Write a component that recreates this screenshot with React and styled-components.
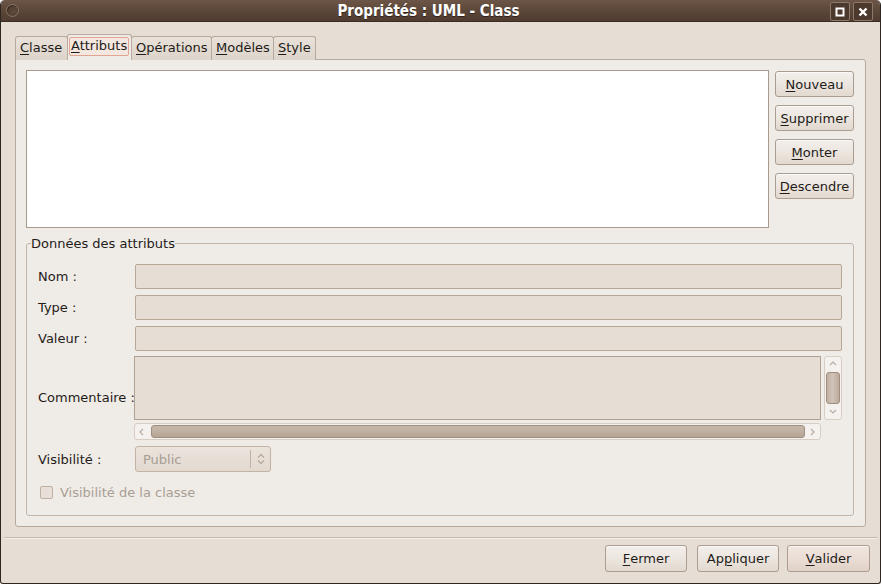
import React from "react";
import styled, { createGlobalStyle, css } from "styled-components";

const Global = createGlobalStyle`
  html, body { margin: 0; padding: 0; background: #ffffff; }
  body { font-family: "DejaVu Sans", "Liberation Sans", sans-serif; font-size: 13px; color: #1f1c19; }
  u { text-decoration: underline; text-underline-offset: 2px; text-decoration-thickness: 1px; }
`;

const Window = styled.div`
  width: 881px;
  height: 584px;
  box-sizing: border-box;
  display: flex;
  flex-direction: column;
  background: #e6ded5;
  border-left: 1px solid #2e2620;
  border-right: 1px solid #2e2620;
  border-bottom: 1px solid #2e2620;
  border-radius: 5px 5px 3px 3px;
  overflow: hidden;
`;

const TitleBar = styled.div`
  height: 22px;
  flex: none;
  position: relative;
  display: flex;
  align-items: center;
  justify-content: center;
  padding-right: 24px;
  background: linear-gradient(#6d5647 0%, #5c4739 50%, #4f3c30 100%);
  border-bottom: 1px solid #3a2c23;
  box-sizing: border-box;
`;

const Title = styled.div`
  font-family: "DejaVu Sans Condensed", "DejaVu Sans", sans-serif;
  font-stretch: condensed;
  font-weight: bold;
  font-size: 15px;
  color: #ffffff;
  text-shadow: 0 1px 0 #2d221b;
`;

const MenuDot = styled.div`
  position: absolute;
  left: 5px;
  top: 4px;
  width: 11px;
  height: 11px;
  border-radius: 50%;
  border: 1px solid #8a7565;
  background: radial-gradient(circle at 60% 60%, #5f4a3c, #4a382d);
  box-shadow: inset 1px 1px 0 #3a2b22;
`;

const WinButtons = styled.div`
  position: absolute;
  right: 7px;
  top: 2px;
  display: flex;
  gap: 3px;
`;

const WinButton = styled.div`
  width: 18px;
  height: 17px;
  border: 1px solid #8d796a;
  border-radius: 2px;
  background: #4b392e;
  display: flex;
  align-items: center;
  justify-content: center;
`;

const Body = styled.div`
  flex: 1;
  display: flex;
  flex-direction: column;
  padding: 12px 14px 0 14px;
`;

const Tabs = styled.div`
  display: flex;
  align-items: flex-end;
  height: 26px;
  position: relative;
  z-index: 1;
  margin-bottom: -1px;
`;

const Tab = styled.div`
  box-sizing: border-box;
  width: ${(p) => p.$w}px;
  height: 24px;
  padding: 3px 0 0 4px;
  border: 1px solid #b7aa9d;
  border-bottom: none;
  border-radius: 3px 3px 0 0;
  background: linear-gradient(#e9e2da, #ddd4ca);
  color: #1f1c19;
  margin-left: ${(p) => (p.$first ? 0 : -1)}px;
  white-space: nowrap;
  overflow: hidden;
  ${(p) =>
    p.$active &&
    css`
      height: 26px;
      padding: 2px 0 0 1px;
      background: #efebe6;
      border-color: #b9ab9e;
    `}
`;

const FocusRect = styled.span`
  display: inline-block;
  padding: 0 1px 2px 1px;
  border: 1px solid #e2a593;
  border-radius: 2px;
  background: #f3e7e0;
`;

const Page = styled.div`
  height: 468px;
  box-sizing: border-box;
  background: #efebe6;
  border: 1px solid #b7aa9d;
  border-radius: 0 3px 3px 3px;
  padding: 10px 11px 10px 10px;
  display: flex;
  flex-direction: column;
  gap: 8px;
`;

const TopRow = styled.div`
  display: flex;
  gap: 6px;
`;

const ListBox = styled.div`
  flex: 1;
  height: 158px;
  background: #ffffff;
  border: 1px solid #a99a8b;
  box-sizing: border-box;
`;

const SideButtons = styled.div`
  width: 79px;
  display: flex;
  flex-direction: column;
  gap: 8px;
  padding-top: 1px;
`;

const Button = styled.div`
  box-sizing: border-box;
  height: ${(p) => p.$h || 26}px;
  width: ${(p) => (p.$w ? p.$w + "px" : "auto")};
  border: 1px solid #ab9d90;
  border-radius: 3px;
  background: linear-gradient(#f3efeb 0%, #ebe5de 55%, #e2d9cf 100%);
  box-shadow: inset 0 1px 0 #fbf9f7;
  display: flex;
  align-items: center;
  justify-content: center;
  color: #1f1c19;
  ${(p) =>
    p.$default &&
    css`
      margin-left: -2px;
      background: linear-gradient(#f1e5df 0%, #eaddd5 55%, #e0d0c6 100%);
      border-color: #ae9c90;
    `}
`;

const Frame = styled.fieldset`
  flex: 1;
  margin: 0;
  border: 1px solid #c3b5a8;
  border-radius: 3px;
  padding: 13px 11px 0 11px;
  display: grid;
  grid-template-columns: 97px 1fr;
  grid-auto-rows: min-content;
  row-gap: 6px;
  align-content: start;
  min-width: 0;
`;

const Legend = styled.legend`
  padding: 0;
  margin-left: -7px;
  color: #1f1c19;
`;

const Label = styled.div`
  display: flex;
  align-items: ${(p) => (p.$top ? "flex-start" : "center")};
  padding-top: ${(p) => (p.$top ? 33 : 0)}px;
  white-space: nowrap;
  padding-left: 0;
`;

const Entry = styled.div`
  height: 25px;
  box-sizing: border-box;
  border: 1px solid #b7a797;
  border-radius: 2px;
  background: #e6ddd4;
`;

const CommentArea = styled.div`
  display: grid;
  grid-template-columns: 1fr 18px;
  grid-template-rows: 64px 17px;
  column-gap: 3px;
  row-gap: 3px;
  margin-left: -1px;
  margin-top: -1px;
`;

const TextArea = styled.div`
  border: 1px solid #b1a192;
  background: #e6ddd4;
`;

const ScrollTrack = styled.div`
  box-sizing: border-box;
  border: 1px solid #d7cdc3;
  border-radius: 3px;
  background: #f4f1ee;
  display: flex;
  align-items: center;
  justify-content: space-between;
  flex-direction: ${(p) => (p.$vertical ? "column" : "row")};
  padding: ${(p) => (p.$vertical ? "3px 1px" : "1px 3px")};
`;

const Thumb = styled.div`
  box-sizing: border-box;
  border: 1px solid #9f8f80;
  border-radius: 3px;
  ${(p) =>
    p.$vertical
      ? css`
          width: 14px;
          height: 32px;
          background: linear-gradient(90deg, #c0b0a2, #d0c3b7 45%, #bcab9c);
        `
      : css`
          flex: 1;
          height: 13px;
          margin: 0 4px 0 5px;
          background: linear-gradient(#c6b7a9, #c1b1a3 45%, #b6a595);
        `}
`;

const Arrow = styled.svg`
  flex: none;
`;

const ComboWrap = styled.div`
  width: 136px;
  height: 26px;
  box-sizing: border-box;
  border: 1px solid #c3b3a4;
  border-radius: 3px;
  background: linear-gradient(#ebe4dd, #e2d9cf);
  display: flex;
  align-items: center;
  color: #a79d93;
`;

const ComboText = styled.div`
  flex: 1;
  padding-left: 7px;
`;

const ComboSep = styled.div`
  width: 1px;
  height: 18px;
  background: #c1b2a4;
`;

const ComboArrow = styled.div`
  width: 19px;
  display: flex;
  align-items: center;
  justify-content: center;
`;

const CheckRow = styled.div`
  grid-column: 1 / span 2;
  display: flex;
  align-items: center;
  gap: 7px;
  padding-left: 2px;
  margin-top: 7px;
  color: #a99f95;
`;

const CheckBox = styled.div`
  width: 11px;
  height: 11px;
  border: 1px solid #bfb1a4;
  border-radius: 2px;
  background: #e8e0d8;
`;

const Separator = styled.div`
  height: 1px;
  background: #c5b7aa;
  border-bottom: 1px solid #f3efeb;
  margin: 10px -11px 0 -11px;
`;

const Footer = styled.div`
  display: flex;
  justify-content: flex-end;
  gap: 10px;
  padding: 6px 0 0 0;
  margin-right: -4px;
`;

function ArrowIcon({ dir }) {
  const d = {
    up: "M1 5 L4 2 L7 5",
    down: "M1 2 L4 5 L7 2",
    left: "M5 1 L2 4 L5 7",
    right: "M2 1 L5 4 L2 7",
  }[dir];
  return (
    <Arrow width="8" height="8" viewBox="0 0 8 8">
      <path d={d} fill="none" stroke="#b9ada2" strokeWidth="1.2" />
    </Arrow>
  );
}

export default function App() {
  return (
    <>
      <Global />
      <Window>
        <TitleBar>
          <MenuDot />
          <Title>Propriétés : UML - Class</Title>
          <WinButtons>
            <WinButton>
              <svg width="10" height="10" viewBox="0 0 10 10">
                <rect x="1.5" y="1.5" width="7" height="7" fill="none" stroke="#ffffff" strokeWidth="2" />
              </svg>
            </WinButton>
            <WinButton>
              <svg width="10" height="10" viewBox="0 0 10 10">
                <path d="M1.5 1.5 L8.5 8.5 M8.5 1.5 L1.5 8.5" stroke="#ffffff" strokeWidth="2.4" />
              </svg>
            </WinButton>
          </WinButtons>
        </TitleBar>
        <Body>
          <Tabs>
            <Tab $first $w={53}>
              <u>C</u>lasse
            </Tab>
            <Tab $active $w={65}>
              <FocusRect>
                <u>A</u>ttributs
              </FocusRect>
            </Tab>
            <Tab $w={81}>
              <u>O</u>pérations
            </Tab>
            <Tab $w={63}>
              <u>M</u>odèles
            </Tab>
            <Tab $w={43}>
              <u>S</u>tyle
            </Tab>
          </Tabs>
          <Page>
            <TopRow>
              <ListBox />
              <SideButtons>
                <Button>
                  <u>N</u>ouveau
                </Button>
                <Button>
                  <u>S</u>upprimer
                </Button>
                <Button>
                  <u>M</u>onter
                </Button>
                <Button>
                  <u>D</u>escendre
                </Button>
              </SideButtons>
            </TopRow>
            <Frame>
              <Legend>Données des attributs</Legend>
              <Label>Nom :</Label>
              <Entry />
              <Label>Type :</Label>
              <Entry />
              <Label>Valeur :</Label>
              <Entry />
              <Label $top>Commentaire :</Label>
              <CommentArea>
                <TextArea />
                <ScrollTrack $vertical>
                  <ArrowIcon dir="up" />
                  <Thumb $vertical />
                  <ArrowIcon dir="down" />
                </ScrollTrack>
                <ScrollTrack>
                  <ArrowIcon dir="left" />
                  <Thumb />
                  <ArrowIcon dir="right" />
                </ScrollTrack>
              </CommentArea>
              <Label>Visibilité :</Label>
              <ComboWrap>
                <ComboText>Public</ComboText>
                <ComboSep />
                <ComboArrow>
                  <svg width="8" height="12" viewBox="0 0 8 12">
                    <path d="M1 4.5 L4 1.5 L7 4.5 M1 7.5 L4 10.5 L7 7.5" fill="none" stroke="#b3a699" strokeWidth="1.1" />
                  </svg>
                </ComboArrow>
              </ComboWrap>
              <CheckRow>
                <CheckBox />
                Visibilité de la classe
              </CheckRow>
            </Frame>
          </Page>
          <Separator />
          <Footer>
            <Button $w={82} $h={27}>
              <u>F</u>ermer
            </Button>
            <Button $w={82} $h={27}>
              Ap<u>p</u>liquer
            </Button>
            <Button $w={83} $h={27} $default>
              <u>V</u>alider
            </Button>
          </Footer>
        </Body>
      </Window>
    </>
  );
}
